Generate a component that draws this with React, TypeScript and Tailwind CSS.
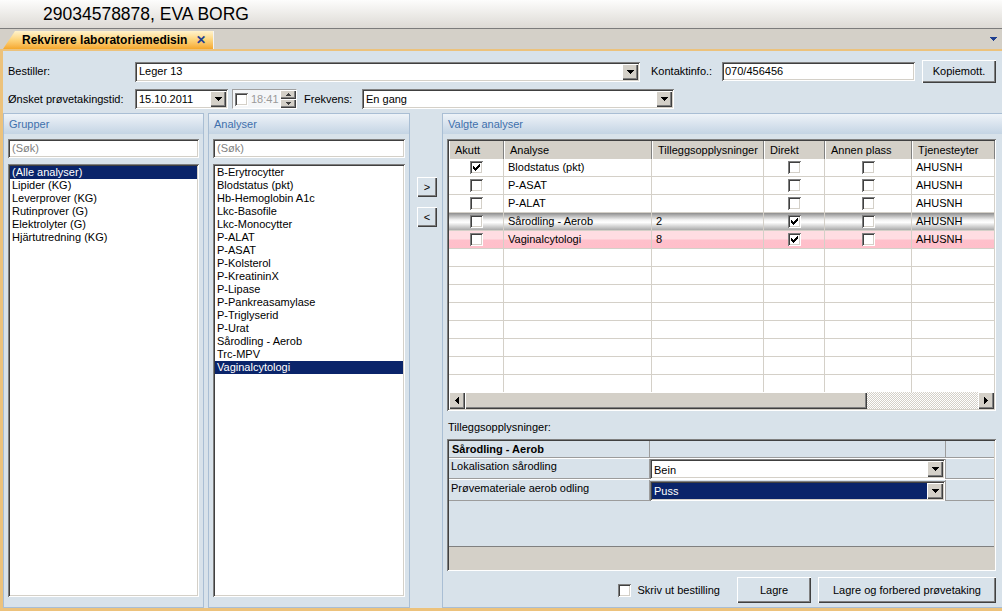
import React from 'react';

const sunken =
  'shadow-[inset_1px_1px_0_#808080,inset_-1px_-1px_0_#ffffff,inset_2px_2px_0_#404040,inset_-2px_-2px_0_#d4d0c8]';
const raised =
  'shadow-[inset_1px_1px_0_#ffffff,inset_-1px_-1px_0_#404040,inset_-2px_-2px_0_#808080]';

function DownArrow() {
  return (
    <svg width="7" height="4" viewBox="0 0 7 4" shapeRendering="crispEdges">
      <path d="M0 0h7v1H0zM1 1h5v1H1zM2 2h3v1H2zM3 3h1v1H3z" fill="#000" />
    </svg>
  );
}

function DropBtn() {
  return (
    <div className={`w-[16px] h-full shrink-0 bg-[#d4d0c8] flex items-center justify-center ${raised}`}>
      <DownArrow />
    </div>
  );
}

function Combo({ value, className = '', selected = false }: { value: string; className?: string; selected?: boolean }) {
  return (
    <div className={`flex bg-white p-[2px] ${sunken} ${className}`}>
      <div
        className={`flex-1 flex items-center px-[2px] whitespace-nowrap overflow-hidden ${
          selected ? 'bg-[#0a246a] text-white' : ''
        }`}
      >
        {value}
      </div>
      <DropBtn />
    </div>
  );
}

function Check({ checked = false }: { checked?: boolean }) {
  return (
    <div className={`w-[13px] h-[13px] shrink-0 bg-white flex items-center justify-center ${sunken}`}>
      {checked && (
        <svg width="7" height="7" viewBox="0 0 7 7" shapeRendering="crispEdges">
          <path d="M6 0h1v1H6zM5 1h2v1H5zM0 2h1v1H0zM4 2h3v1H4zM0 3h2v1H0zM3 3h3v1H3zM0 4h5v1H0zM1 5h3v1H1zM2 6h1v1H2z" fill="#000" />
        </svg>
      )}
    </div>
  );
}

function Button({ label, className = '' }: { label: string; className?: string }) {
  return (
    <div className={`flex items-center justify-center bg-[#d8e2ea] ${raised} ${className}`}>
      {label}
    </div>
  );
}

function Panel({ title, className = '', children }: { title: string; className?: string; children: React.ReactNode }) {
  return (
    <div className={`flex flex-col border border-[#a9bed4] bg-[#d8e2ea] ${className}`}>
      <div className="h-[20px] shrink-0 bg-linear-to-b from-[#eef3f8] to-[#c4d4e4] pl-[5px] flex items-center text-[#3f70ac]">
        {title}
      </div>
      {children}
    </div>
  );
}

function ListBox({ items, selected, className = '' }: { items: string[]; selected: string; className?: string }) {
  return (
    <div className={`bg-white p-[2px] overflow-hidden ${sunken} ${className}`}>
      {items.map((item) => (
        <div
          key={item}
          className={`h-[13px] leading-[13px] px-[2px] whitespace-nowrap ${
            item === selected ? 'bg-[#0a246a] text-white' : ''
          }`}
        >
          {item}
        </div>
      ))}
    </div>
  );
}

function SearchBox() {
  return (
    <div className={`h-[19px] shrink-0 bg-white px-[4px] flex items-center text-[#808080] ${sunken}`}>(Søk)</div>
  );
}

const groups = ['(Alle analyser)', 'Lipider (KG)', 'Leverprover (KG)', 'Rutinprover (G)', 'Elektrolyter (G)', 'Hjärtutredning (KG)'];

const analyses = [
  'B-Erytrocytter',
  'Blodstatus (pkt)',
  'Hb-Hemoglobin A1c',
  'Lkc-Basofile',
  'Lkc-Monocytter',
  'P-ALAT',
  'P-ASAT',
  'P-Kolsterol',
  'P-KreatininX',
  'P-Lipase',
  'P-Pankreasamylase',
  'P-Triglyserid',
  'P-Urat',
  'Sårodling - Aerob',
  'Trc-MPV',
  'Vaginalcytologi',
];

const headers = [
  { label: 'Akutt', w: 'w-[55px]' },
  { label: 'Analyse', w: 'w-[148px]' },
  { label: 'Tilleggsopplysninger', w: 'w-[112px]' },
  { label: 'Direkt', w: 'w-[61px]' },
  { label: 'Annen plass', w: 'w-[87px]' },
  { label: 'Tjenesteyter', w: 'w-[83px]' },
];

const rows = [
  { akutt: true, name: 'Blodstatus (pkt)', extra: '', direkt: false, bg: 'bg-white' },
  { akutt: false, name: 'P-ASAT', extra: '', direkt: false, bg: 'bg-white' },
  { akutt: false, name: 'P-ALAT', extra: '', direkt: false, bg: 'bg-white' },
  {
    akutt: false,
    name: 'Sårodling - Aerob',
    extra: '2',
    direkt: true,
    bg: 'bg-[linear-gradient(to_bottom,#8e8e8e,#f2f2f2_40%,#ffffff_55%,#aaaaaa)]',
  },
  {
    akutt: false,
    name: 'Vaginalcytologi',
    extra: '8',
    direkt: true,
    bg: 'bg-[linear-gradient(to_bottom,#ffdde2,#ffdde2_45%,#ffc0cb_55%,#ffbfca)]',
  },
];

function Cell({ w, children, center = false }: { w: string; children?: React.ReactNode; center?: boolean }) {
  return (
    <div
      className={`${w} shrink-0 h-full border-r border-[#d4d0c8] flex items-center whitespace-nowrap overflow-hidden ${
        center ? 'justify-center' : 'px-[4px]'
      }`}
    >
      {children}
    </div>
  );
}

function ValgteGrid() {
  return (
    <div className={`h-[272px] shrink-0 bg-white p-[2px] flex flex-col ${sunken}`}>
      <div className="h-[18px] shrink-0 flex bg-[#d4d0c8]">
        {headers.map((h) => (
          <div
            key={h.label}
            className={`${h.w} shrink-0 h-full pl-[5px] flex items-center border-l border-white border-r border-r-[#808080] whitespace-nowrap overflow-hidden`}
          >
            {h.label}
          </div>
        ))}
      </div>
      <div className="flex-1 min-h-0 overflow-hidden">
        {rows.map((r) => (
          <div key={r.name} className={`h-[18px] flex border-b border-[#d4d0c8] ${r.bg}`}>
            <Cell w="w-[55px]" center>
              <Check checked={r.akutt} />
            </Cell>
            <Cell w="w-[148px]">{r.name}</Cell>
            <Cell w="w-[112px]">{r.extra}</Cell>
            <Cell w="w-[61px]" center>
              <Check checked={r.direkt} />
            </Cell>
            <Cell w="w-[87px]" center>
              <Check />
            </Cell>
            <Cell w="w-[83px]">AHUSNH</Cell>
          </div>
        ))}
        {Array.from({ length: 9 }).map((_, i) => (
          <div key={i} className="h-[18px] flex border-b border-[#d4d0c8]">
            <Cell w="w-[55px]" />
            <Cell w="w-[148px]" />
            <Cell w="w-[112px]" />
            <Cell w="w-[61px]" />
            <Cell w="w-[87px]" />
            <Cell w="w-[83px]" />
          </div>
        ))}
      </div>
      <div className="h-[17px] shrink-0 flex">
        <div className={`w-[16px] h-full bg-[#d4d0c8] flex items-center justify-center ${raised}`}>
          <svg width="4" height="7" viewBox="0 0 4 7" shapeRendering="crispEdges">
            <path d="M3 0h1v7H3zM2 1h1v5H2zM1 2h1v3H1zM0 3h1v1H0z" fill="#000" />
          </svg>
        </div>
        <div className={`w-[402px] h-full bg-[#d4d0c8] ${raised}`} />
        <div className="flex-1 h-full bg-[repeating-conic-gradient(#ffffff_0_25%,#d4d0c8_0_50%)] bg-[length:2px_2px]" />
        <div className={`w-[16px] h-full bg-[#d4d0c8] flex items-center justify-center ${raised}`}>
          <svg width="4" height="7" viewBox="0 0 4 7" shapeRendering="crispEdges">
            <path d="M0 0h1v7H0zM1 1h1v5H1zM2 2h1v3H2zM3 3h1v1H3z" fill="#000" />
          </svg>
        </div>
      </div>
    </div>
  );
}

function DetailGrid() {
  return (
    <div className={`h-[132px] shrink-0 bg-[#d8e2ea] p-[2px] flex flex-col ${sunken}`}>
      <div className="h-[17px] shrink-0 flex border-b border-[#9c9c9c]">
        <div className="w-[201px] shrink-0 border-r border-[#9c9c9c] pl-[3px] flex items-center font-bold">
          Sårodling - Aerob
        </div>
        <div className="w-[296px] shrink-0 border-r border-[#9c9c9c]" />
        <div className="flex-1" />
      </div>
      <div className="h-[21px] shrink-0 flex border-b border-[#9c9c9c] border-t border-t-white">
        <div className="w-[201px] shrink-0 border-r border-[#9c9c9c] pl-[2px] pt-[1px]">Lokalisation sårodling</div>
        <div className="w-[296px] shrink-0 border-r border-[#9c9c9c]">
          <Combo value="Bein" className="h-[20px] [&>div:first-child]:items-end" />
        </div>
        <div className="flex-1" />
      </div>
      <div className="h-[22px] shrink-0 flex border-b border-[#9c9c9c] border-t border-t-white">
        <div className="w-[201px] shrink-0 border-r border-[#9c9c9c] pl-[2px] pt-[2px]">Prøvemateriale aerob odling</div>
        <div className="w-[296px] shrink-0 border-r border-[#9c9c9c] pt-[1px]">
          <Combo value="Puss" selected className="h-[20px]" />
        </div>
        <div className="flex-1" />
      </div>
      <div className="flex-1" />
      <div className="h-[23px] shrink-0 bg-[#d4d0c8] border-t border-[#808080]" />
    </div>
  );
}

export default function App() {
  return (
    <div className="w-[1002px] h-[611px] overflow-hidden flex flex-col bg-[#d4d0c8] text-[11px] leading-[13px] text-black font-['Liberation_Sans',Arial,sans-serif]">
      {/* title bar */}
      <div className="h-[29px] shrink-0 border-b border-[#7c7c7c] bg-linear-to-b from-[#fdfdfc] to-[#dddad5] pl-[43px] flex items-center text-[17.5px] leading-[20px]">
        29034578878, EVA BORG
      </div>

      {/* tab strip */}
      <div className="h-[20px] shrink-0 flex items-end relative">
        <div className="ml-[3px] h-[18px] w-[211px] flex items-center pl-[19px] font-bold text-[12px] bg-linear-to-b from-[#fff3cc] via-[#fdd47a] to-[#f5a829] border-r border-[#f4f4f4] [clip-path:polygon(12px_0,100%_0,100%_100%,0_100%)]">
          Rekvirere laboratoriemedisin
          <span className="ml-[9px] text-[#1d3f93] text-[12px]">✕</span>
        </div>
        <svg className="absolute right-[5px] top-[8px]" width="7" height="4" viewBox="0 0 7 4" shapeRendering="crispEdges">
          <path d="M0 0h7v1H0zM1 1h5v1H1zM2 2h3v1H2zM3 3h1v1H3z" fill="#1f3f8f" />
        </svg>
      </div>

      {/* main */}
      <div className="flex-1 min-h-0 flex flex-col border-t-2 border-l-[3px] border-b-[3px] border-[#ecc27c] bg-[#d8e2ea]">
        <div className="pt-[9px] pl-[5px] flex flex-col">
          <div className="h-[23px] flex items-center">
            <div className="w-[127px] shrink-0">Bestiller:</div>
            <Combo value="Leger 13" className="w-[505px] h-[20px]" />
            <div className="ml-[11px] w-[71px] shrink-0">Kontaktinfo.:</div>
            <div className={`w-[193px] h-[19px] bg-white px-[3px] flex items-center ${sunken}`}>070/456456</div>
            <Button label="Kopiemott." className="ml-[7px] w-[74px] h-[23px]" />
          </div>
          <div className="mt-[5px] h-[22px] flex items-center">
            <div className="w-[127px] shrink-0">Ønsket prøvetakingstid:</div>
            <Combo value="15.10.2011" className="w-[93px] h-[20px]" />
            <div className="ml-[4px] w-[65px] h-[20px] flex items-center bg-[#f4f6f8] border border-[#a0a0a0] border-r-white border-b-white pl-[2px]">
              <Check />
              <span className="ml-[3px] text-[#9a9a9a]">18:41</span>
              <div className="ml-auto w-[16px] h-full flex flex-col">
                <div className={`flex-1 bg-[#d4d0c8] flex items-center justify-center ${raised}`}>
                  <svg width="5" height="3" viewBox="0 0 5 3" shapeRendering="crispEdges">
                    <path d="M2 0h1v1H2zM1 1h3v1H1zM0 2h5v1H0z" fill="#404040" />
                  </svg>
                </div>
                <div className={`flex-1 bg-[#d4d0c8] flex items-center justify-center ${raised}`}>
                  <svg width="5" height="3" viewBox="0 0 5 3" shapeRendering="crispEdges">
                    <path d="M0 0h5v1H0zM1 1h3v1H1zM2 2h1v1H2z" fill="#404040" />
                  </svg>
                </div>
              </div>
            </div>
            <div className="ml-[7px] w-[58px] shrink-0">Frekvens:</div>
            <Combo value="En gang" className="w-[312px] h-[20px]" />
          </div>
        </div>

        <div className="mt-[3px] flex-1 min-h-0 flex">
          <Panel title="Grupper" className="w-[201px] shrink-0">
            <div className="flex-1 min-h-0 flex flex-col px-[4px] pt-[5px] pb-[10px]">
              <SearchBox />
              <ListBox items={groups} selected="(Alle analyser)" className="mt-[6px] flex-1" />
            </div>
          </Panel>

          <Panel title="Analyser" className="ml-[4px] w-[202px] shrink-0">
            <div className="flex-1 min-h-0 flex flex-col px-[4px] pt-[5px] pb-[10px]">
              <SearchBox />
              <ListBox items={analyses} selected="Vaginalcytologi" className="mt-[6px] flex-1" />
            </div>
          </Panel>

          <div className="w-[32px] shrink-0 pl-[7px] pt-[64px] flex flex-col">
            <Button label=">" className="w-[20px] h-[20px]" />
            <Button label="<" className="mt-[10px] w-[20px] h-[20px]" />
          </div>

          <Panel title="Valgte analyser" className="flex-1 min-w-0 border-r-0">
            <div className="flex-1 min-h-0 flex flex-col pl-[4px] pr-[6px] pt-[5px]">
              <ValgteGrid />
              <div className="mt-[10px] h-[14px] pl-[1px]">Tilleggsopplysninger:</div>
              <div className="mt-[4px]">
                <DetailGrid />
              </div>
              <div className="mt-[6px] h-[26px] flex items-center justify-end">
                <Check />
                <span className="ml-[6px]">Skriv ut bestilling</span>
                <Button label="Lagre" className="ml-[17px] w-[74px] h-[26px]" />
                <Button label="Lagre og forbered prøvetaking" className="ml-[7px] w-[178px] h-[26px]" />
              </div>
            </div>
          </Panel>
        </div>
      </div>
    </div>
  );
}
